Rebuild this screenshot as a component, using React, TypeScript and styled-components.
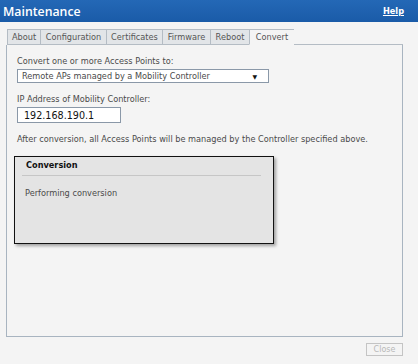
import React from "react";
import styled, { createGlobalStyle } from "styled-components";

const Global = createGlobalStyle`
  *, *::before, *::after { box-sizing: border-box; }
  html, body { margin: 0; padding: 0; background: #f4f4f4; }
  body { font-family: "DejaVu Sans", Verdana, sans-serif; font-size: 8.2px; color: #4a4a4a; }
`;

const Page = styled.div`
  width: 418px;
  height: 364px;
  display: flex;
  flex-direction: column;
  background: #f4f4f4;
`;

const TitleBar = styled.div`
  height: 22px;
  display: flex;
  align-items: center;
  justify-content: space-between;
  padding: 0 14px 0 3px;
  background: linear-gradient(#2468b6, #1a5ba8);
`;

const Title = styled.div`
  color: #fff;
  font-family: "Open Sans", "DejaVu Sans", sans-serif;
  font-weight: 600;
  font-size: 12.3px;
`;

const HelpLink = styled.a`
  color: #fff;
  font-weight: bold;
  font-size: 8.2px;
  text-decoration: underline;
`;

const Body = styled.div`
  flex: 1;
  display: flex;
  flex-direction: column;
  padding: 7px 15px 0 6px;
`;

const Tabs = styled.div`
  display: flex;
  align-items: flex-end;
  height: 16px;
  padding-left: 1px;
`;

const Tab = styled.div<{ $w: number; $active?: boolean }>`
  width: ${(p) => p.$w}px;
  height: 16px;
  display: flex;
  align-items: center;
  justify-content: center;
  border: 1px solid #b4bcc4;
  border-right: none;
  border-bottom: ${(p) => (p.$active ? "1px solid #f4f4f4" : "1px solid #b4bcc4")};
  background: ${(p) => (p.$active ? "#f4f4f4" : "#e2e5e8")};
  color: #555;
  &:last-of-type { border-right: 1px solid #b4bcc4; }
`;

const TabFill = styled.div`
  flex: 1;
  height: 16px;
  border-bottom: 1px solid #b4bcc4;
`;

const Panel = styled.div`
  height: 292px;
  border: 1px solid #a8b4c0;
  border-top: none;
  padding: 10px 10px 0 10px;
  display: flex;
  flex-direction: column;
`;

const Label = styled.div`
  height: 12px;
  line-height: 12px;
  margin-bottom: 2px;
`;

const Select = styled.div`
  width: 252px;
  height: 14px;
  border: 1px solid #8a98a8;
  background: #fff;
  display: flex;
  align-items: center;
  justify-content: space-between;
  padding: 0 11px 0 4px;
  margin-bottom: 10px;
`;

const Arrow = styled.span`
  font-size: 6px;
  color: #111;
`;

const Input = styled.div`
  width: 104px;
  height: 16px;
  border: 1px solid #8a98a8;
  background: #fff;
  padding-left: 6px;
  display: flex;
  align-items: center;
  font-size: 9.6px;
  color: #111;
  margin-bottom: 10px;
`;

const Note = styled.div`
  height: 12px;
  line-height: 12px;
  margin-bottom: 11px;
  white-space: nowrap;
`;

const Dialog = styled.div`
  width: 260px;
  height: 88px;
  margin-left: -3px;
  border: 1px solid #111;
  background: #e4e4e4;
  box-shadow: 2px 2px 3px rgba(0, 0, 0, 0.35);
  padding: 0 12px 0 7px;
  display: flex;
  flex-direction: column;
`;

const DialogHead = styled.div`
  font-weight: bold;
  color: #111;
  height: 19px;
  padding: 3px 0 0 4px;
  border-bottom: 1px solid #c6c6c6;
`;

const DialogText = styled.div`
  padding: 12px 0 0 3px;
`;

const Footer = styled.div`
  display: flex;
  justify-content: flex-end;
  padding: 6px 0 0 0;
`;

const CloseButton = styled.div`
  width: 37px;
  height: 13px;
  border: 1px solid #c4c4c4;
  color: #b8b8b8;
  display: flex;
  align-items: center;
  justify-content: center;
  font-size: 8px;
`;

const tabs: [string, number][] = [
  ["About", 33],
  ["Configuration", 66],
  ["Certificates", 56],
  ["Firmware", 48],
  ["Reboot", 39],
];

export default function App() {
  return (
    <Page>
      <Global />
      <TitleBar>
        <Title>Maintenance</Title>
        <HelpLink>Help</HelpLink>
      </TitleBar>
      <Body>
        <Tabs>
          {tabs.map(([t, w]) => (
            <Tab key={t} $w={w}>{t}</Tab>
          ))}
          <Tab $w={45} $active>Convert</Tab>
          <TabFill />
        </Tabs>
        <Panel>
          <Label>Convert one or more Access Points to:</Label>
          <Select>
            <span>Remote APs managed by a Mobility Controller</span>
            <Arrow>▼</Arrow>
          </Select>
          <Label>IP Address of Mobility Controller:</Label>
          <Input>192.168.190.1</Input>
          <Note>After conversion, all Access Points will be managed by the Controller specified above.</Note>
          <Dialog>
            <DialogHead>Conversion</DialogHead>
            <DialogText>Performing conversion</DialogText>
          </Dialog>
        </Panel>
        <Footer>
          <CloseButton>Close</CloseButton>
        </Footer>
      </Body>
    </Page>
  );
}
